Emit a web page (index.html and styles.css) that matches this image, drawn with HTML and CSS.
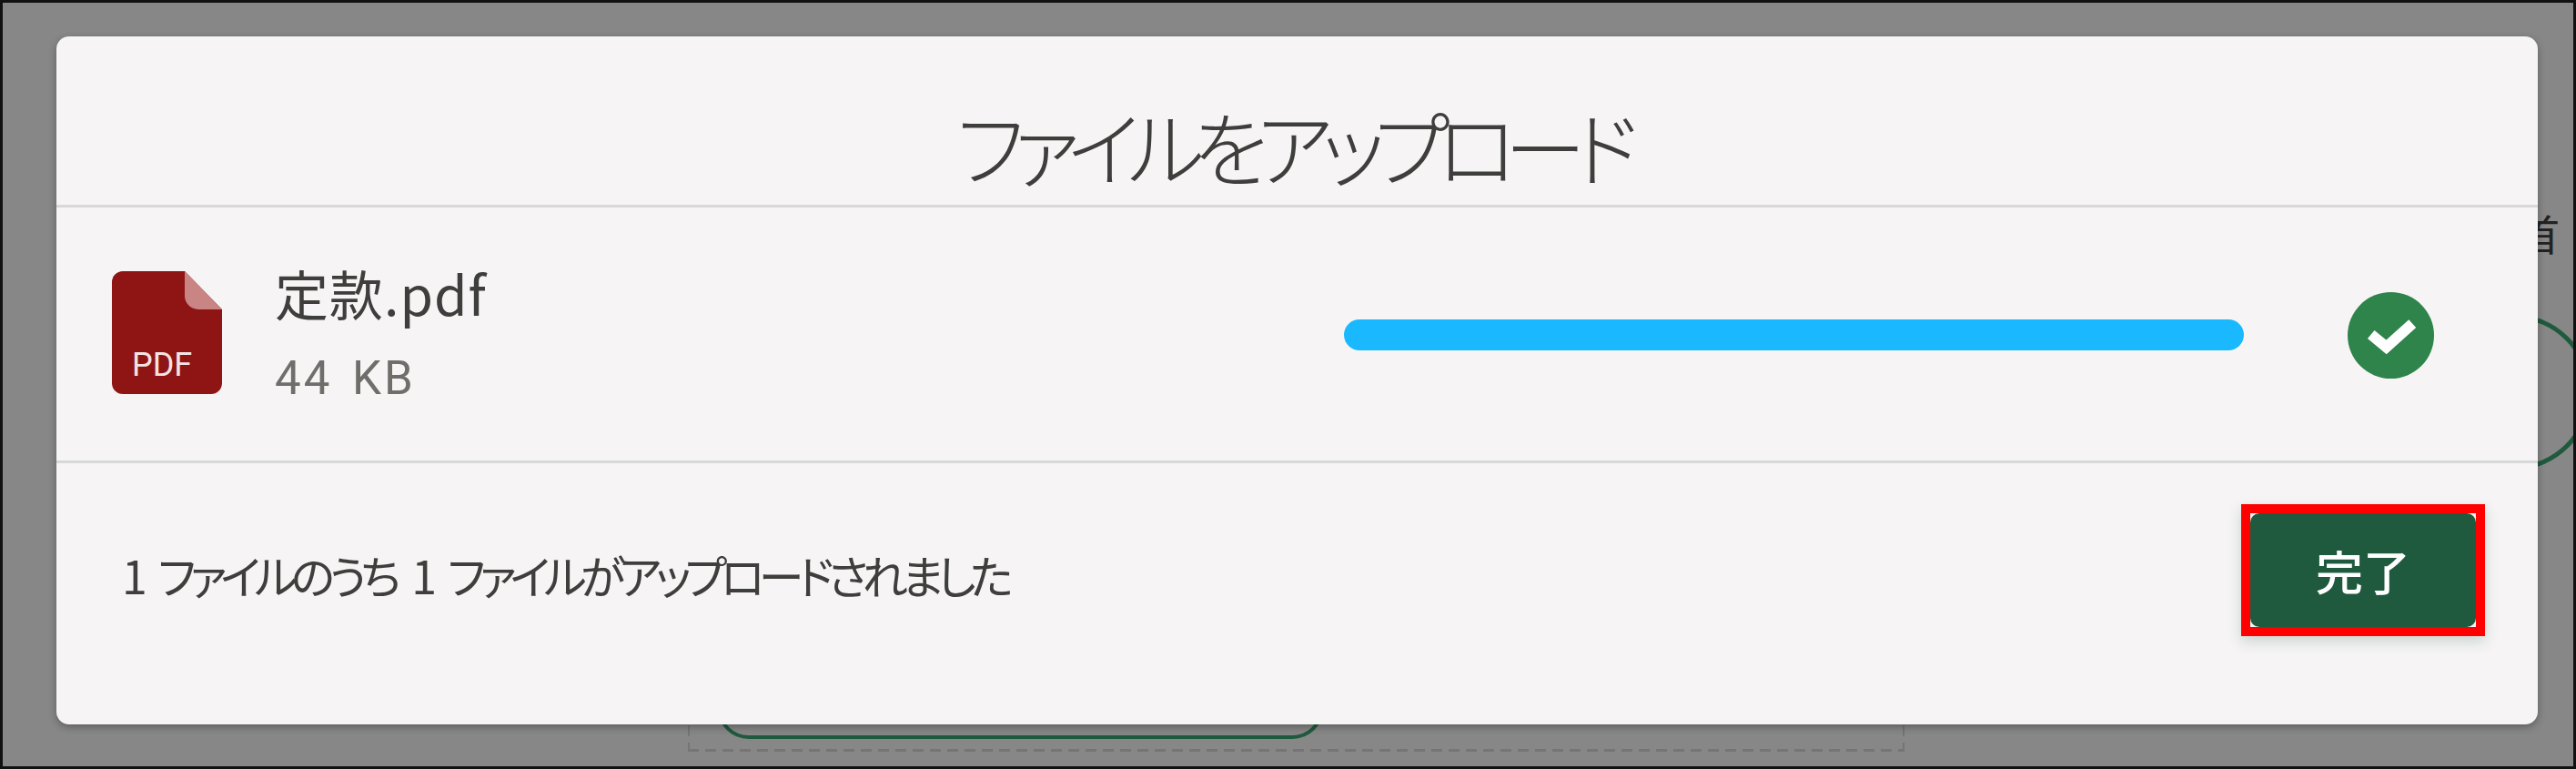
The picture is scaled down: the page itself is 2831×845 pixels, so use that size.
FILE: index.html
```html
<!DOCTYPE html>
<html lang="ja">
<head>
    <meta charset="UTF-8">
    <meta name="viewport" content="width=device-width, initial-scale=1.0">
    <title>ファイルをアップロード</title>
    <link rel="stylesheet" href="styles.css">
</head>
<body>
    <div class="screen">
        <!-- page behind the dialog, only the edges show -->
        <div class="behind">
            <div class="dropzone">
                <div class="upload-button"></div>
            </div>
            <div class="side">
                <div class="side-text">首</div>
                <div class="side-circle"></div>
            </div>
        </div>

        <div class="modal">
            <h1 class="modal-title">ファイルをアップロード</h1>
            <div class="file-row">
                <svg class="file-icon" viewBox="0 0 121 135">
                    <path d="M12 0H80L121 42V123a12 12 0 0 1-12 12H12a12 12 0 0 1-12-12V12A12 12 0 0 1 12 0Z" fill="#8f1515"/>
                    <path d="M80 0L121 42H95a15 15 0 0 1-15-15Z" fill="#c98484"/>
                    <text class="file-icon-label" x="22" y="115">PDF</text>
                </svg>
                <div class="file-info">
                    <div class="file-name">定款.pdf</div>
                    <div class="file-size">44 KB</div>
                </div>
                <div class="progress"></div>
                <svg class="done-icon" viewBox="0 0 96 96">
                    <circle cx="48" cy="48" r="48" fill="#2e844a"/>
                    <path d="M26 47L43 61L72 35" fill="none" stroke="#fff" stroke-width="12"/>
                </svg>
            </div>
            <div class="modal-footer">
                <span class="status">1 ファイルのうち 1 ファイルがアップロードされました</span>
                <span class="highlight"><button class="done-button">完了</button></span>
            </div>
        </div>
    </div>
</body>
</html>
```

FILE: styles.css
```css
html, body {
    margin: 0;
    padding: 0;
    height: 100%;
    overflow: hidden;
}

body {
    font-family: "Noto Sans CJK JP", "Noto Sans", sans-serif;
    color: #3e3e3c;
}

.screen {
    position: relative;
    box-sizing: border-box;
    height: 845px;
    border: 3px solid #111;
    background-color: #878787;
    overflow: hidden;
}

.behind {
    display: flex;
    height: 100%;
    padding-left: 753px;
    box-sizing: border-box;
}

.dropzone {
    box-sizing: border-box;
    flex: 0 0 1337px;
    height: 200px;
    margin-top: 623px;
    padding: 0 0 14px 32px;
    display: flex;
    align-items: flex-end;
    background-image:
        repeating-linear-gradient(to right, #757575 0 12px, transparent 12px 19px),
        repeating-linear-gradient(to bottom, #757575 0 12px, transparent 12px 19px),
        repeating-linear-gradient(to bottom, #757575 0 12px, transparent 12px 19px);
    background-size: 100% 3px, 2px 100%, 2px 100%;
    background-position: left bottom, left top, right top;
    background-repeat: no-repeat;
}

.upload-button {
    box-sizing: border-box;
    width: 667px;
    height: 120px;
    border: 4px solid #1f5a3e;
    border-radius: 35px;
}

.side {
    margin-left: 696px;
    padding-top: 224px;
}

.side-text {
    width: 60px;
    margin-left: -22px;
    font-size: 46px;
    line-height: 56px;
    color: #222;
}

.side-circle {
    box-sizing: border-box;
    width: 172px;
    height: 172px;
    margin: 62px 0 0 -113px;
    border: 5px solid #1f5a3e;
    border-radius: 50%;
}

.modal {
    position: absolute;
    left: 59px;
    top: 37px;
    width: 2727px;
    height: 756px;
    background-color: #f6f4f5;
    border-radius: 14px;
    box-shadow: 0 3px 8px rgba(0, 0, 0, 0.3);
    display: flex;
    flex-direction: column;
}

.modal-title {
    box-sizing: border-box;
    height: 188px;
    margin: 0;
    padding: 69px 12px 0 0;
    border-bottom: 3px solid #d8d8d8;
    text-align: center;
    font-size: 90px;
    line-height: 100px;
    font-weight: 300;
    font-feature-settings: "palt";
    letter-spacing: -13px;
}

.file-row {
    box-sizing: border-box;
    height: 281px;
    padding: 0 0 0 61px;
    border-bottom: 3px solid #d8d8d8;
    display: flex;
    align-items: center;
}

.file-icon {
    flex: none;
    width: 121px;
    height: 135px;
    margin-bottom: 4px;
}

.file-icon-label {
    font-family: Roboto, sans-serif;
    font-size: 36px;
    fill: #f3e3e3;
}

.file-info {
    width: 1175px;
    margin-left: 58px;
}

.file-name {
    margin-top: -1px;
    font-size: 59px;
    line-height: 70px;
    letter-spacing: 1px;
}

.file-size {
    font-family: Roboto, sans-serif;
    font-size: 51px;
    line-height: 62px;
    margin-top: 28px;
    letter-spacing: 3px;
    word-spacing: 6px;
    color: #706e6b;
}

.progress {
    flex: none;
    width: 989px;
    height: 34px;
    margin-top: 1px;
    border-radius: 17px;
    background-color: #1ab9ff;
}

.done-icon {
    flex: none;
    width: 95px;
    height: 95px;
    margin: 2px 0 0 114px;
}

.modal-footer {
    flex: 1;
    padding: 45px 58px 0 72px;
    display: flex;
    align-items: flex-start;
    justify-content: space-between;
}

.status {
    margin-top: 42px;
    font-size: 50px;
    line-height: 70px;
    font-feature-settings: "palt";
    letter-spacing: -6.7px;
    word-spacing: 14px;
}

.highlight {
    display: block;
    border: 10px solid #f00;
    box-shadow: 0 6px 14px rgba(31, 90, 62, 0.2);
}

.done-button {
    display: block;
    width: 248px;
    height: 125px;
    border: 0;
    border-radius: 10px;
    padding: 0;
    background-color: #1f5a3e;
    color: #fff;
    font-family: inherit;
    font-size: 52px;
    font-weight: 500;
}
```
